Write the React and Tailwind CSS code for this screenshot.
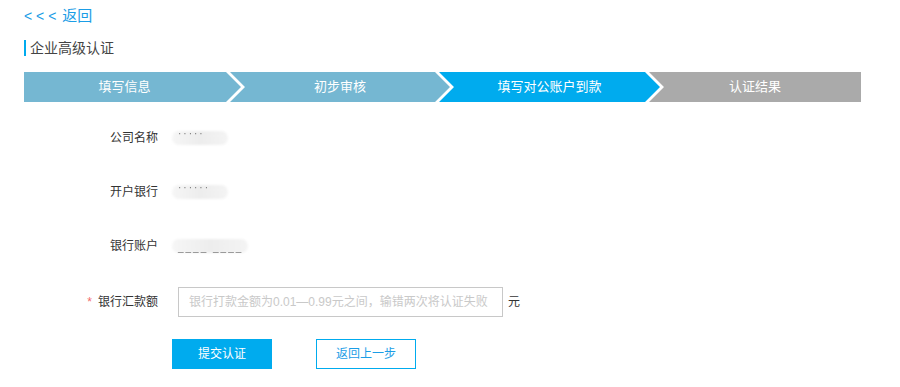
import React from 'react';

const steps = [
  {
    label: '填写信息',
    cls: 'w-[217px] pr-[16px] bg-[#75b7d2] [clip-path:polygon(0_0,calc(100%_-_15px)_0,100%_50%,calc(100%_-_15px)_100%,0_100%)]',
  },
  {
    label: '初步审核',
    cls: 'w-[220px] -ml-[11px] bg-[#75b7d2] [clip-path:polygon(0_0,calc(100%_-_15px)_0,100%_50%,calc(100%_-_15px)_100%,0_100%,15px_50%)]',
  },
  {
    label: '填写对公账户到款',
    cls: 'w-[221px] -ml-[11px] bg-[#00abee] [clip-path:polygon(0_0,calc(100%_-_15px)_0,100%_50%,calc(100%_-_15px)_100%,0_100%,15px_50%)]',
  },
  {
    label: '认证结果',
    cls: 'flex-1 -ml-[11px] bg-[#aaaaaa] [clip-path:polygon(0_0,100%_0,100%_100%,0_100%,15px_50%)]',
  },
];

const Blur = ({ width, text, bottom }) => (
  <div className={`relative h-[14px] ${width}`}>
    <div className="absolute inset-0 rounded-full bg-gradient-to-r from-[#f6f6f6] via-[#ededed] to-[#f4f4f4] blur-[1px]" />
    <span
      className={`absolute left-[6px] whitespace-nowrap ${bottom ? 'bottom-[-1px]' : 'top-[-3px]'} text-[10px] leading-[12px] tracking-[2px] text-[#777] blur-[0.6px]`}
    >
      {text}
    </span>
  </div>
);

const Row = ({ label, required, children, className = '' }) => (
  <div className={`flex items-center h-[30px] ${className}`}>
    <div className="w-[158px] text-right text-[12px] text-[#333]">
      {required && <span className="text-[#f26b6b] mr-[6px]">*</span>}
      {label}
    </div>
    {children}
  </div>
);

export default function App() {
  return (
    <div className="w-[900px] h-[387px] bg-white font-['Liberation_Sans','Noto_Sans_CJK_SC',sans-serif] overflow-hidden">
      <div className="pl-[24px] pt-[6px]">
        <a href="#" className="flex items-center h-[20px] leading-[20px] text-[14px] text-[#1b9de6]">
          <span>&lt; &lt; &lt;</span>
          <span className="ml-[6px] text-[15px]">返回</span>
        </a>
        <div className="mt-[14px] h-[16px] flex items-center border-l-2 border-[#00abee] pl-[4px] text-[14px] leading-[16px] text-[#444]">
          企业高级认证
        </div>
        <div className="mt-[16px] w-[837px] h-[30px] flex">
          {steps.map((s) => (
            <div
              key={s.label}
              className={`h-full flex items-center justify-center text-white text-[13px] ${s.cls}`}
            >
              {s.label}
            </div>
          ))}
        </div>
      </div>

      <div className="mt-[21px]">
        <Row label="公司名称">
          <div className="ml-[14px]">
            <Blur width="w-[56px]" text="·····" />
          </div>
        </Row>
        <Row label="开户银行" className="mt-[24px]">
          <div className="ml-[14px]">
            <Blur width="w-[56px]" text="······" />
          </div>
        </Row>
        <Row label="银行账户" className="mt-[24px]">
          <div className="ml-[14px]">
            <Blur width="w-[76px]" text="____ ____" bottom />
          </div>
        </Row>
        <Row label="银行汇款额" required className="mt-[26px]">
          <input
            type="text"
            placeholder="银行打款金额为0.01—0.99元之间，输错两次将认证失败"
            className="ml-[20px] w-[325px] h-[30px] border border-[#c8c8c8] px-[10px] text-[12px] text-[#333] placeholder:text-[#c9c9c9] outline-none"
          />
          <span className="ml-[5px] text-[12px] text-[#333]">元</span>
        </Row>
        <div className="mt-[22px] ml-[172px] flex gap-[44px]">
          <button className="w-[100px] h-[30px] bg-[#00abee] text-white text-[12px]">
            提交认证
          </button>
          <button className="w-[100px] h-[30px] border border-[#00abee] text-[#1b9de6] text-[12px] bg-white">
            返回上一步
          </button>
        </div>
      </div>
    </div>
  );
}
